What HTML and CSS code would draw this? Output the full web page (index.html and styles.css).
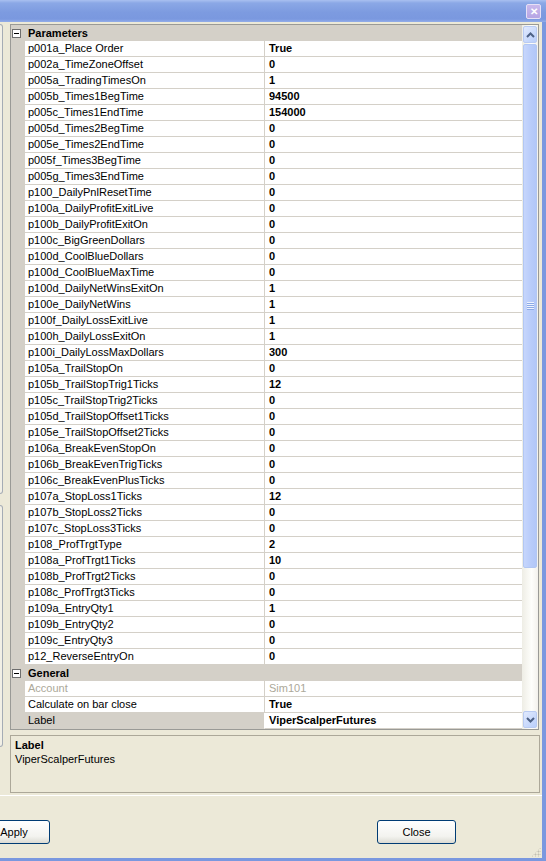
FILE: index.html
```html
<!DOCTYPE html>
<html lang="en">
<head>
    <meta charset="UTF-8">
    <title>Strategy Properties</title>
    <link rel="stylesheet" href="styles.css">
</head>
<body>

<div class="window">
    <!-- Title bar -->
    <div class="titlebar">
        <div class="close-btn">&#x2715;</div>
    </div>

    <div class="frame">
        <!-- Main area: edge of the left panels + property grid -->
        <div class="main">
            <div class="side">
                <div class="side-box top"></div>
                <div class="side-box bottom"></div>
            </div>

            <div class="grid">
                <div class="rows">
                    <div class="cat"><span class="gutter"><span class="toggle"></span></span><span class="cat-name">Parameters</span></div>
                    <div class="row"><span class="gutter"></span><span class="name">p001a_Place Order</span><span class="value">True</span></div>
                    <div class="row"><span class="gutter"></span><span class="name">p002a_TimeZoneOffset</span><span class="value">0</span></div>
                    <div class="row"><span class="gutter"></span><span class="name">p005a_TradingTimesOn</span><span class="value">1</span></div>
                    <div class="row"><span class="gutter"></span><span class="name">p005b_Times1BegTime</span><span class="value">94500</span></div>
                    <div class="row"><span class="gutter"></span><span class="name">p005c_Times1EndTime</span><span class="value">154000</span></div>
                    <div class="row"><span class="gutter"></span><span class="name">p005d_Times2BegTime</span><span class="value">0</span></div>
                    <div class="row"><span class="gutter"></span><span class="name">p005e_Times2EndTime</span><span class="value">0</span></div>
                    <div class="row"><span class="gutter"></span><span class="name">p005f_Times3BegTime</span><span class="value">0</span></div>
                    <div class="row"><span class="gutter"></span><span class="name">p005g_Times3EndTime</span><span class="value">0</span></div>
                    <div class="row"><span class="gutter"></span><span class="name">p100_DailyPnlResetTime</span><span class="value">0</span></div>
                    <div class="row"><span class="gutter"></span><span class="name">p100a_DailyProfitExitLive</span><span class="value">0</span></div>
                    <div class="row"><span class="gutter"></span><span class="name">p100b_DailyProfitExitOn</span><span class="value">0</span></div>
                    <div class="row"><span class="gutter"></span><span class="name">p100c_BigGreenDollars</span><span class="value">0</span></div>
                    <div class="row"><span class="gutter"></span><span class="name">p100d_CoolBlueDollars</span><span class="value">0</span></div>
                    <div class="row"><span class="gutter"></span><span class="name">p100d_CoolBlueMaxTime</span><span class="value">0</span></div>
                    <div class="row"><span class="gutter"></span><span class="name">p100d_DailyNetWinsExitOn</span><span class="value">1</span></div>
                    <div class="row"><span class="gutter"></span><span class="name">p100e_DailyNetWins</span><span class="value">1</span></div>
                    <div class="row"><span class="gutter"></span><span class="name">p100f_DailyLossExitLive</span><span class="value">1</span></div>
                    <div class="row"><span class="gutter"></span><span class="name">p100h_DailyLossExitOn</span><span class="value">1</span></div>
                    <div class="row"><span class="gutter"></span><span class="name">p100i_DailyLossMaxDollars</span><span class="value">300</span></div>
                    <div class="row"><span class="gutter"></span><span class="name">p105a_TrailStopOn</span><span class="value">0</span></div>
                    <div class="row"><span class="gutter"></span><span class="name">p105b_TrailStopTrig1Ticks</span><span class="value">12</span></div>
                    <div class="row"><span class="gutter"></span><span class="name">p105c_TrailStopTrig2Ticks</span><span class="value">0</span></div>
                    <div class="row"><span class="gutter"></span><span class="name">p105d_TrailStopOffset1Ticks</span><span class="value">0</span></div>
                    <div class="row"><span class="gutter"></span><span class="name">p105e_TrailStopOffset2Ticks</span><span class="value">0</span></div>
                    <div class="row"><span class="gutter"></span><span class="name">p106a_BreakEvenStopOn</span><span class="value">0</span></div>
                    <div class="row"><span class="gutter"></span><span class="name">p106b_BreakEvenTrigTicks</span><span class="value">0</span></div>
                    <div class="row"><span class="gutter"></span><span class="name">p106c_BreakEvenPlusTicks</span><span class="value">0</span></div>
                    <div class="row"><span class="gutter"></span><span class="name">p107a_StopLoss1Ticks</span><span class="value">12</span></div>
                    <div class="row"><span class="gutter"></span><span class="name">p107b_StopLoss2Ticks</span><span class="value">0</span></div>
                    <div class="row"><span class="gutter"></span><span class="name">p107c_StopLoss3Ticks</span><span class="value">0</span></div>
                    <div class="row"><span class="gutter"></span><span class="name">p108_ProfTrgtType</span><span class="value">2</span></div>
                    <div class="row"><span class="gutter"></span><span class="name">p108a_ProfTrgt1Ticks</span><span class="value">10</span></div>
                    <div class="row"><span class="gutter"></span><span class="name">p108b_ProfTrgt2Ticks</span><span class="value">0</span></div>
                    <div class="row"><span class="gutter"></span><span class="name">p108c_ProfTrgt3Ticks</span><span class="value">0</span></div>
                    <div class="row"><span class="gutter"></span><span class="name">p109a_EntryQty1</span><span class="value">1</span></div>
                    <div class="row"><span class="gutter"></span><span class="name">p109b_EntryQty2</span><span class="value">0</span></div>
                    <div class="row"><span class="gutter"></span><span class="name">p109c_EntryQty3</span><span class="value">0</span></div>
                    <div class="row"><span class="gutter"></span><span class="name">p12_ReverseEntryOn</span><span class="value">0</span></div>

                    <div class="cat"><span class="gutter"><span class="toggle"></span></span><span class="cat-name">General</span></div>
                    <div class="row disabled"><span class="gutter"></span><span class="name">Account</span><span class="value">Sim101</span></div>
                    <div class="row"><span class="gutter"></span><span class="name">Calculate on bar close</span><span class="value">True</span></div>
                    <div class="row selected"><span class="gutter"></span><span class="name">Label</span><span class="value">ViperScalperFutures</span></div>
                </div>

                <!-- Vertical scrollbar -->
                <div class="scrollbar">
                    <div class="sb-btn up"><svg width="9" height="6" viewBox="0 0 9 6"><path d="M1 5 L4.5 1.5 L8 5" fill="none" stroke="#4d6185" stroke-width="2"/></svg></div>
                    <div class="sb-track">
                        <div class="sb-thumb"><span class="grip"></span></div>
                    </div>
                    <div class="sb-btn down"><svg width="9" height="6" viewBox="0 0 9 6"><path d="M1 1 L4.5 4.5 L8 1" fill="none" stroke="#4d6185" stroke-width="2"/></svg></div>
                </div>
            </div>
        </div>

        <!-- Help text for the selected property -->
        <div class="desc">
            <div class="desc-title">Label</div>
            <div class="desc-text">ViperScalperFutures</div>
        </div>

        <div class="buttons">
            <button class="btn apply">Apply</button>
            <button class="btn close">Close</button>
        </div>

        <div class="grip-corner"></div>
    </div>
</div>

</body>
</html>
```

FILE: styles.css
```css
body {
    margin: 0;
    background-color: #ECE9D8;
    font-family: "Liberation Sans", Arial, sans-serif;
    font-size: 11px;
    color: #000;
}

.window {
    width: 546px;
    height: 861px;
    overflow: hidden;
    display: flex;
    flex-direction: column;
    background-color: #ECE9D8;
}

/* Title bar (inactive XP style) */
.titlebar {
    height: 22px;
    flex-shrink: 0;
    display: flex;
    justify-content: flex-end;
    align-items: center;
    padding-right: 5px;
    background: linear-gradient(#a9c0f0 0, #8ba8e6 3px, #7d9be0 12px, #7a98df 19px, #93ade9 22px);
}

.close-btn {
    width: 13px;
    height: 13px;
    border: 1px solid #e6e0f6;
    border-radius: 2px;
    background: linear-gradient(#c9b9ec, #b6a5e4);
    color: #fff;
    font-size: 10px;
    font-weight: bold;
    line-height: 13px;
    text-align: center;
}

/* Window body with the blue frame on the right and bottom */
.frame {
    flex: 1;
    position: relative;
    display: flex;
    flex-direction: column;
    border-right: 4px solid #7a98df;
    border-bottom: 3px solid #7a98df;
}

.main {
    display: flex;
    align-items: flex-start;
    height: 708px;
    padding-top: 2px;
}

/* Edge of the panels that sit to the left */
.side {
    width: 3px;
    margin-right: 7px;
    display: flex;
    flex-direction: column;
}

.side-box {
    border: 1px solid #a5acb5;
    border-left: none;
    border-radius: 0 3px 3px 0;
    background-color: #f2f0e6;
}

.side-box.top {
    height: 468px;
}

.side-box.bottom {
    height: 240px;
    margin-top: 11px;
}

/* Property grid */
.grid {
    width: 527px;
    height: 704px;
    display: flex;
    border: 1px solid #9a9a96;
}

.rows {
    width: 511px;
    background-color: #d4d0c8;
}

.row {
    display: grid;
    grid-template-columns: 14px 240px 1fr;
    height: 16px;
}

.gutter {
    background-color: #d4d0c8;
}

.name {
    background-color: #fff;
    border-right: 1px solid #d4d0c8;
    border-bottom: 1px solid #d4d0c8;
    padding-left: 3px;
    line-height: 15px;
    white-space: nowrap;
    overflow: hidden;
}

.value {
    background-color: #fff;
    border-bottom: 1px solid #d4d0c8;
    padding-left: 4px;
    line-height: 15px;
    font-weight: bold;
}

.row.disabled .name,
.row.disabled .value {
    color: #aca899;
    font-weight: normal;
}

.row.selected .name {
    background-color: #d4d0c8;
    border-right-color: #fff;
}

.cat {
    display: grid;
    grid-template-columns: 14px 1fr;
    height: 16px;
    background-color: #d4d0c8;
}

.cat .gutter {
    display: flex;
    align-items: center;
    padding-left: 1px;
}

.toggle {
    position: relative;
    width: 7px;
    height: 7px;
    border: 1px solid #6e6e6e;
    background-color: #fff;
}

.toggle::after {
    content: "";
    position: absolute;
    left: 1px;
    top: 3px;
    width: 5px;
    height: 1px;
    background-color: #000;
}

.cat-name {
    padding-left: 3px;
    line-height: 16px;
    font-weight: bold;
}

/* XP scrollbar */
.scrollbar {
    width: 16px;
    display: flex;
    flex-direction: column;
    background: linear-gradient(90deg, #eeede5, #fefefb 60%, #f3f1ec);
}

.sb-btn {
    height: 15px;
    margin: 1px 1px 0 1px;
    border: 1px solid #b9cbf3;
    border-radius: 2px;
    background: linear-gradient(135deg, #e1eafe, #b9cefa);
    display: flex;
    align-items: center;
    justify-content: center;
}

.sb-btn.down {
    margin: 0 1px 1px 1px;
}

.sb-track {
    flex: 1;
    padding: 1px 1px;
}

.sb-thumb {
    height: 522px;
    border: 1px solid #b2c7f3;
    border-radius: 2px;
    background: linear-gradient(90deg, #c6d6fc, #bacdfa 50%, #b2c7f8);
    display: flex;
    align-items: center;
    justify-content: center;
}

.grip {
    width: 7px;
    height: 8px;
    background: repeating-linear-gradient(#eef3fe 0, #eef3fe 1px, #8caae6 1px, #8caae6 2px);
}

/* Description pane */
.desc {
    margin: 3px 2px 0 10px;
    height: 54px;
    border: 1px solid #aca899;
    padding: 2px 0 0 4px;
}

.desc-title {
    font-weight: bold;
    line-height: 14px;
}

.desc-text {
    line-height: 14px;
}

.buttons {
    margin-top: 2px;
    border-top: 1px solid #fff;
    display: flex;
    padding-top: 24px;
}

.btn {
    height: 24px;
    border: 1px solid #003c74;
    border-radius: 3px;
    background: linear-gradient(#ffffff, #f3f3ef 70%, #dcdbd3);
    font-family: "Liberation Sans", Arial, sans-serif;
    font-size: 11px;
    color: #000;
    padding: 0;
}

.btn.apply {
    width: 72px;
    margin-left: -22px;
}

.btn.close {
    width: 79px;
    margin-left: 327px;
}

.grip-corner {
    position: absolute;
    right: 1px;
    bottom: 1px;
    width: 10px;
    height: 10px;
    background:
        radial-gradient(circle, #c2bfb1 0.8px, transparent 1.2px) 0 0 / 3px 3px;
    clip-path: polygon(100% 0, 100% 100%, 0 100%);
}
```
